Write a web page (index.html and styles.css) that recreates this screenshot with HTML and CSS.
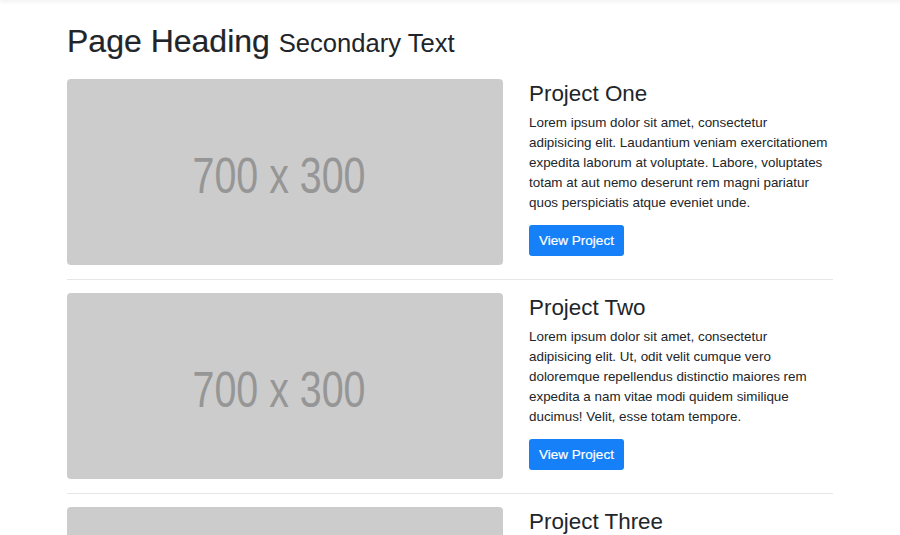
FILE: index.html
```html
<!DOCTYPE html>
<html lang="en">
<head>
<meta charset="utf-8">
<title>Page Heading</title>
<link rel="stylesheet" href="styles.css">
</head>
<body>
<div class="topbar"></div>
<main class="container">
  <h1 class="page-heading">Page Heading <small>Secondary Text</small></h1>

  <div class="project">
    <a class="thumb" href="#">
      <svg viewBox="0 0 436 186" width="436" height="186"><text x="212" y="114" text-anchor="middle" textLength="173" lengthAdjust="spacingAndGlyphs">700 x 300</text></svg>
    </a>
    <div class="info">
      <h3>Project One</h3>
      <p>Lorem ipsum dolor sit amet, consectetur adipisicing elit. Laudantium veniam exercitationem expedita laborum at voluptate. Labore, voluptates totam at aut nemo deserunt rem magni pariatur quos perspiciatis atque eveniet unde.</p>
      <a class="btn" href="#">View Project</a>
    </div>
  </div>
  <hr class="divider">

  <div class="project">
    <a class="thumb" href="#">
      <svg viewBox="0 0 436 186" width="436" height="186"><text x="212" y="114" text-anchor="middle" textLength="173" lengthAdjust="spacingAndGlyphs">700 x 300</text></svg>
    </a>
    <div class="info">
      <h3>Project Two</h3>
      <p>Lorem ipsum dolor sit amet, consectetur adipisicing elit. Ut, odit velit cumque vero doloremque repellendus distinctio maiores rem expedita a nam vitae modi quidem similique ducimus! Velit, esse totam tempore.</p>
      <a class="btn" href="#">View Project</a>
    </div>
  </div>
  <hr class="divider">

  <div class="project">
    <a class="thumb" href="#">
      <svg viewBox="0 0 436 186" width="436" height="186"><text x="212" y="114" text-anchor="middle" textLength="173" lengthAdjust="spacingAndGlyphs">700 x 300</text></svg>
    </a>
    <div class="info">
      <h3>Project Three</h3>
      <p>Lorem ipsum dolor sit amet, consectetur adipisicing elit. Omnis, temporibus, dolores, at, praesentium ut unde repudiandae voluptatum sit ab debitis suscipit fugiat natus velit excepturi amet commodi deleniti alias possimus!</p>
      <a class="btn" href="#">View Project</a>
    </div>
  </div>
</main>
</body>
</html>
```

FILE: styles.css
```css
html, body {
  margin: 0;
  padding: 0;
  background: #fff;
}
body {
  font-family: "Liberation Sans", Arial, sans-serif;
  color: #212529;
  overflow: hidden;
}
.topbar {
  height: 0;
  box-shadow: 0 0 4px 1px rgba(0, 0, 0, 0.12);
}
.container {
  width: 766px;
  margin-left: 67px;
  padding-top: 22px;
}
.page-heading {
  margin: 0 0 18.6px;
  font-size: 32px;
  font-weight: 400;
  line-height: 1.2;
  -webkit-text-stroke: 0.2px #212529;
}
.page-heading small {
  font-size: 25.6px;
  -webkit-text-stroke: 0;
}
.project {
  display: flex;
  gap: 26px;
  height: 186px;
}
.thumb {
  display: block;
  flex: 0 0 436px;
  width: 436px;
  height: 186px;
  background: #cccccc;
  border-radius: 4px;
  overflow: hidden;
}
.thumb svg {
  display: block;
}
.thumb text {
  font-family: "Liberation Sans", Arial, sans-serif;
  font-size: 50px;
  fill: #969696;
}
.info {
  flex: 1;
  min-width: 0;
}
.info h3 {
  margin: 2px 0 5px;
  font-size: 22.4px;
  font-weight: 400;
  line-height: 1.2;
}
.info p {
  margin: 0 0 12px;
  font-size: 13.4px;
  line-height: 20px;
}
.btn {
  display: inline-block;
  height: 31px;
  line-height: 31px;
  padding: 0 10px;
  box-sizing: border-box;
  width: 95px;
  text-align: center;
  background: #1580f8;
  color: #fff;
  font-size: 13.5px;
  text-decoration: none;
  border-radius: 3px;
  -webkit-text-stroke: 0.2px #fff;
}
.divider {
  margin: 14px 0 13px;
  border: 0;
  border-top: 1px solid #e6e6e6;
  height: 0;
}
```
